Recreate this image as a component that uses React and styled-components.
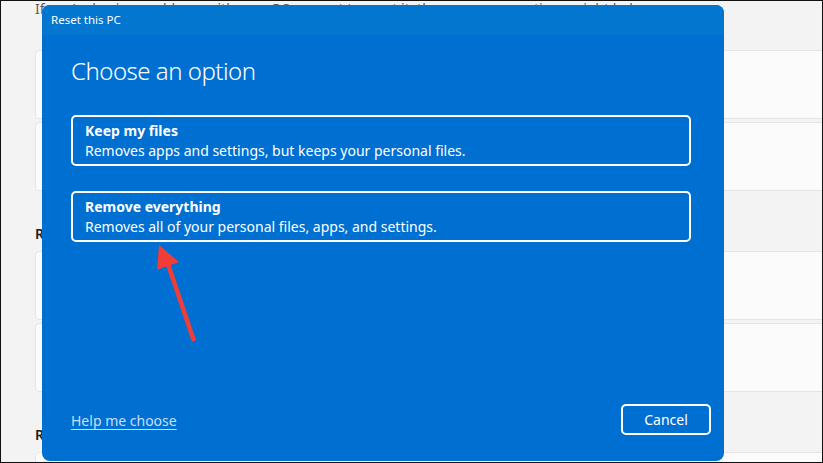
import React from "react";
import styled, { createGlobalStyle } from "styled-components";

const GlobalStyle = createGlobalStyle`
  html, body {
    margin: 0;
    padding: 0;
    overflow: hidden;
    background: #f3f3f3;
  }
  * {
    box-sizing: border-box;
  }
`;

const Screen = styled.div`
  position: relative;
  width: 823px;
  height: 463px;
  border: 1px solid #111;
  background: #f3f3f3;
  overflow: hidden;
  font-family: "Noto Sans", "Open Sans", sans-serif;
`;

const Page = styled.div`
  display: flex;
  flex-direction: column;
  padding-left: 34px;
  margin-right: -40px;
`;

const Intro = styled.div`
  font-size: 14px;
  line-height: 20px;
  color: #5c5c5c;
  margin-top: -2px;
  height: 51px;
  white-space: nowrap;
`;

const CardGroup = styled.div`
  display: flex;
  flex-direction: column;
  gap: 3px;
`;

const Card = styled.div`
  height: 69px;
  background: #fbfbfb;
  border: 1px solid #e5e5e5;
  border-radius: 4px;
`;

const SectionTitle = styled.div`
  height: 60px;
  padding-top: 33px;
  font-size: 14px;
  line-height: 20px;
  font-weight: 600;
  color: #1b1b1b;
`;

const Dialog = styled.div`
  position: absolute;
  left: 41px;
  top: 4px;
  width: 682px;
  height: 456px;
  border-radius: 8px;
  overflow: hidden;
  background: #006fd2;
  color: #fff;
  display: flex;
  flex-direction: column;
`;

const TitleBar = styled.div`
  height: 30px;
  background: #0376d0;
  padding-left: 9px;
  font-size: 11.5px;
  line-height: 30px;
`;

const Body = styled.div`
  flex: 1;
  display: flex;
  flex-direction: column;
  padding: 18px 33px 0 29px;
`;

const Heading = styled.h1`
  margin: 0 0 26px;
  font-size: 24px;
  line-height: 36px;
  font-weight: 300;
  letter-spacing: -0.5px;
`;

const Options = styled.div`
  display: flex;
  flex-direction: column;
  gap: 25px;
`;

const Option = styled.button`
  all: unset;
  box-sizing: border-box;
  cursor: pointer;
  display: block;
  height: 51px;
  border: 2px solid #fff;
  border-radius: 5px;
  padding: 4px 12px 3px;
  font-size: 14px;
  line-height: 20px;
`;

const OptionName = styled.div`
  font-weight: 700;
`;

const OptionText = styled.div``;

const Footer = styled.div`
  margin-top: auto;
  display: flex;
  align-items: center;
  justify-content: space-between;
  padding: 0 13px 26px 29px;
`;

const HelpLink = styled.a`
  font-size: 14px;
  line-height: 20px;
  margin-top: 3px;
  color: #c8def6;
  text-decoration: underline;
  text-underline-offset: 3px;
`;

const CancelButton = styled.button`
  all: unset;
  box-sizing: border-box;
  cursor: pointer;
  width: 90px;
  height: 31px;
  border: 2px solid #fff;
  border-radius: 5px;
  text-align: center;
  font-size: 14px;
  line-height: 27px;
  color: #fff;
`;

const Annotation = styled.svg`
  position: absolute;
  left: -1px;
  top: -1px;
  pointer-events: none;
`;

const options = [
  {
    id: "keep",
    name: "Keep my files",
    text: "Removes apps and settings, but keeps your personal files.",
  },
  {
    id: "remove",
    name: "Remove everything",
    text: "Removes all of your personal files, apps, and settings.",
  },
];

export default function App() {
  return (
    <>
      <GlobalStyle />
      <Screen>
        <Page>
          <Intro>
            If you're having problems with your PC or want to reset it, these
            recovery options might help
          </Intro>
          <CardGroup>
            <Card />
            <Card />
          </CardGroup>
          <SectionTitle>Recovery options</SectionTitle>
          <CardGroup>
            <Card />
            <Card />
          </CardGroup>
          <SectionTitle>Related support</SectionTitle>
          <CardGroup>
            <Card />
          </CardGroup>
        </Page>

        <Dialog>
          <TitleBar>Reset this PC</TitleBar>
          <Body>
            <Heading>Choose an option</Heading>
            <Options>
              {options.map((o) => (
                <Option key={o.id}>
                  <OptionName>{o.name}</OptionName>
                  <OptionText>{o.text}</OptionText>
                </Option>
              ))}
            </Options>
          </Body>
          <Footer>
            <HelpLink>Help me choose</HelpLink>
            <CancelButton>Cancel</CancelButton>
          </Footer>
        </Dialog>

        <Annotation width="823" height="463" viewBox="0 0 823 463">
          <line
            x1="194"
            y1="341"
            x2="168"
            y2="264"
            stroke="#ef3d37"
            strokeWidth="4.5"
          />
          <polygon points="159,245 179,262 157,270" fill="#ef3d37" />
        </Annotation>
      </Screen>
    </>
  );
}
